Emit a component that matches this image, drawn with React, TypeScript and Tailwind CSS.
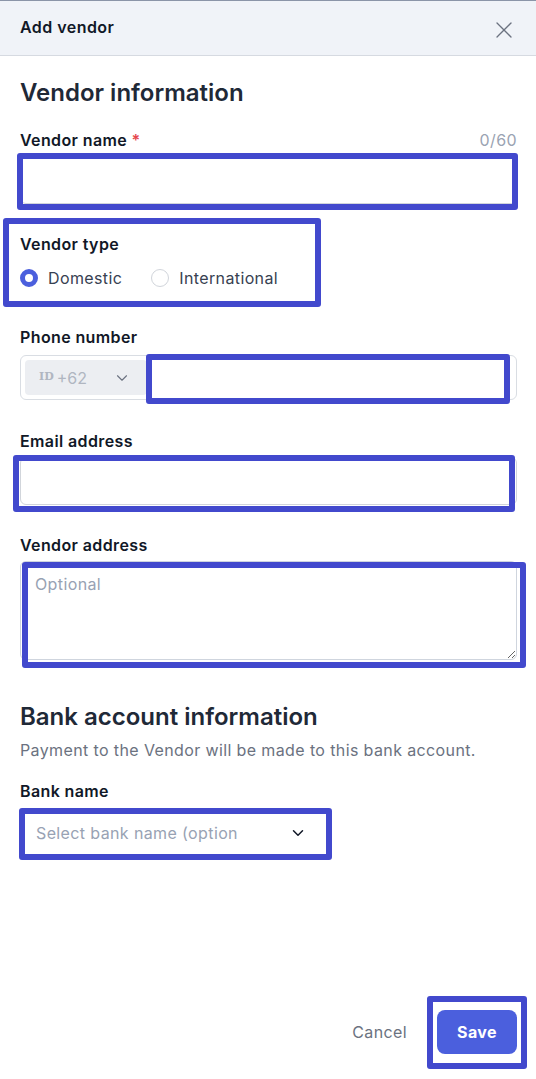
import React from 'react';
import { ChevronDown, X } from 'lucide-react';

// annotation frames drawn over the form
const marks = [
  'left-[17px] top-[153px] w-[501px] h-[57px]',
  'left-[3px] top-[218px] w-[318px] h-[89px]',
  'left-[146px] top-[354px] w-[364px] h-[50px]',
  'left-[13px] top-[455px] w-[502px] h-[57px]',
  'left-[22px] top-[562px] w-[504px] h-[106px]',
  'left-[19px] top-[808px] w-[313px] h-[52px]',
  'left-[427px] top-[996px] w-[100px] h-[73px]',
];

const Label: React.FC<{ children: React.ReactNode; className?: string }> = ({ children, className }) => (
  <label className={`block text-base leading-6 font-semibold text-[#111827] ${className ?? ''}`}>{children}</label>
);

const App: React.FC = () => {
  return (
    <div className="relative h-[1079px] w-[536px] overflow-hidden bg-white flex flex-col font-['Inter',sans-serif] tracking-[0.38px]">
      <div className="h-[56px] shrink-0 bg-[#f0f3f8] border-t border-[#8b95a8] border-b border-b-[#d6dae1] flex items-center justify-between pl-5 pr-[18px]">
        <h1 className="text-base font-semibold text-[#111827] -mt-[2px] tracking-[0.45px]">Add vendor</h1>
        <X className="w-7 h-7 text-[#6b7280] mt-[4px]" strokeWidth={1.1} />
      </div>

      <div className="px-5 pr-[19px]">
        <h2 className="mt-[21px] text-2xl leading-8 font-semibold text-[#1f2937] tracking-normal">Vendor information</h2>

        <div className="mt-[19px] flex items-center justify-between">
          <Label>
            Vendor name <span className="text-[#e5484d]">*</span>
          </Label>
          <span className="text-base text-[#9aa3b2]">0/60</span>
        </div>
        <input className="mt-1 block h-12 w-full rounded-md border border-[#d1d5db] px-3 text-base outline-none" />

        <Label className="mt-[28px]">Vendor type</Label>
        <div className="mt-[10px] flex items-center h-6">
          <span className="w-[18px] h-[18px] rounded-full border-[5px] border-[#4b5fdd] bg-white" />
          <span className="ml-[10px] text-base text-[#374151]">Domestic</span>
          <span className="ml-[29px] w-[18px] h-[18px] rounded-full border border-[#d1d5db] bg-white" />
          <span className="ml-[10px] text-base text-[#374151]">International</span>
        </div>

        <Label className="mt-[35px]">Phone number</Label>
        <div className="mt-[6px] flex h-[45px] w-full rounded-md border border-[#d9dde3] p-1">
          <div className="w-[122px] shrink-0 rounded bg-[#eceef2] flex items-center pl-[14px] pr-[16px]">
            <span className="text-[11px] font-bold text-[#b0b6c1] font-['DejaVu_Serif',serif] tracking-normal">ID</span>
            <span className="ml-[3px] text-base text-[#b0b6c1] tracking-normal">+62</span>
            <ChevronDown className="ml-auto w-[18px] h-[18px] text-[#6b7280]" strokeWidth={1.5} />
          </div>
          <input className="flex-1 min-w-0 px-3 outline-none" />
        </div>

        <Label className="mt-[29px]">Email address</Label>
        <input className="mt-1 block h-12 w-full rounded-md border border-[#d1d5db] px-3 text-base outline-none" />

        <Label className="mt-[28px]">Vendor address</Label>
        <textarea
          placeholder="Optional"
          className="mt-1 block h-[99px] w-full rounded-md border border-[#cfd5de] px-[14px] py-[10px] text-base placeholder:text-[#98a2b3] outline-none"
        />

        <h2 className="mt-[41px] text-2xl leading-8 font-semibold text-[#1f2937] tracking-normal">Bank account information</h2>
        <p className="mt-[5px] text-base leading-6 text-[#6b7280]">Payment to the Vendor will be made to this bank account.</p>

        <Label className="mt-[17px]">Bank name</Label>
        <div className="mt-[6px] flex h-12 w-[308px] items-center rounded-md border border-[#d1d5db] pl-[15px] pr-[20px]">
          <span className="text-base text-[#98a2b3] truncate">Select bank name (option</span>
          <ChevronDown className="ml-auto w-[18px] h-[18px] text-[#111827]" strokeWidth={2} />
        </div>
      </div>

      <div className="mt-auto flex items-center justify-end gap-[30px] pr-[19px] pb-[25px]">
        <button className="text-base text-[#6b7280]">Cancel</button>
        <button className="h-[44px] w-[80px] rounded-lg bg-[#4b5fdd] text-base font-bold text-white">Save</button>
      </div>

      {marks.map((m, i) => (
        <div key={i} className={`pointer-events-none absolute rounded-[3px] border-[6px] border-[#4249cd] ${m}`} />
      ))}
    </div>
  );
};

export default App;
